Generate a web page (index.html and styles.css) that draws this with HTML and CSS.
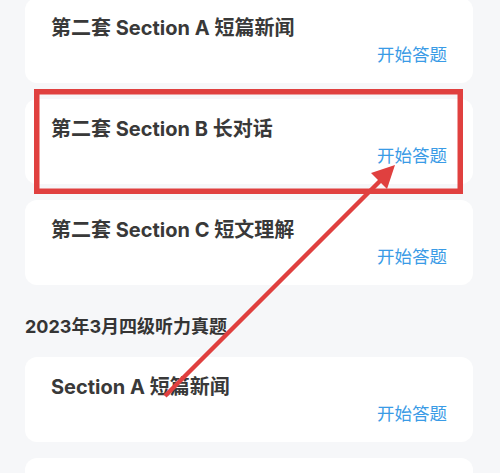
FILE: index.html
```html
<!DOCTYPE html>
<html lang="zh-CN">
<head>
<meta charset="utf-8">
<title>听力真题</title>
<link rel="stylesheet" href="styles.css">
</head>
<body>
<div class="page">
  <div class="list">
    <div class="card">
      <div class="card-title">第二套 Section A 短篇新闻</div>
      <div class="card-action">开始答题</div>
    </div>
    <div class="card">
      <div class="card-title">第二套 Section B 长对话</div>
      <div class="card-action">开始答题</div>
    </div>
    <div class="card">
      <div class="card-title">第二套 Section C 短文理解</div>
      <div class="card-action">开始答题</div>
    </div>
  </div>
  <div class="group-title">2023年3月四级听力真题</div>
  <div class="list">
    <div class="card">
      <div class="card-title">Section A 短篇新闻</div>
      <div class="card-action">开始答题</div>
    </div>
    <div class="card"></div>
  </div>
  <svg class="annot" width="500" height="473" viewBox="0 0 500 473" xmlns="http://www.w3.org/2000/svg">
    <rect x="36.75" y="91.75" width="423.5" height="99.5" fill="none" stroke="#e0403f" stroke-width="5.5"/>
    <line x1="165" y1="396" x2="381" y2="180" stroke="#e0403f" stroke-width="4.5"/>
    <polygon points="395,165 371,173 387,189" fill="#e0403f"/>
  </svg>
</div>
</body>
</html>
```
FILE: styles.css
```css
html, body {
  margin: 0;
  padding: 0;
  background: #f6f7f9;
}
body {
  font-family: Inter, "Noto Sans CJK SC", sans-serif;
  width: 500px;
  height: 473px;
  overflow: hidden;
}
.page {
  position: relative;
  width: 500px;
  height: 473px;
  padding: 0 27px 0 25px;
  box-sizing: border-box;
  margin-top: -2px;
}
.list {
  display: flex;
  flex-direction: column;
  gap: 16px;
}
.card {
  height: 85px;
  box-sizing: border-box;
  background: #ffffff;
  border-radius: 12px;
  padding: 18px 26px 0 26px;
  display: flex;
  flex-direction: column;
}
.card-title {
  font-size: 20px;
  line-height: 24px;
  font-weight: 700;
  color: #393939;
}
.card-action {
  margin-top: 3px;
  align-self: flex-end;
  font-size: 17.5px;
  line-height: 24px;
  color: #3a9be6;
}
.group-title {
  padding: 32px 0 20px 0;
  font-size: 18px;
  line-height: 20px;
  font-weight: 700;
  color: #353535;
}
.annot {
  position: absolute;
  left: 0;
  top: 2px;
  pointer-events: none;
}
```
